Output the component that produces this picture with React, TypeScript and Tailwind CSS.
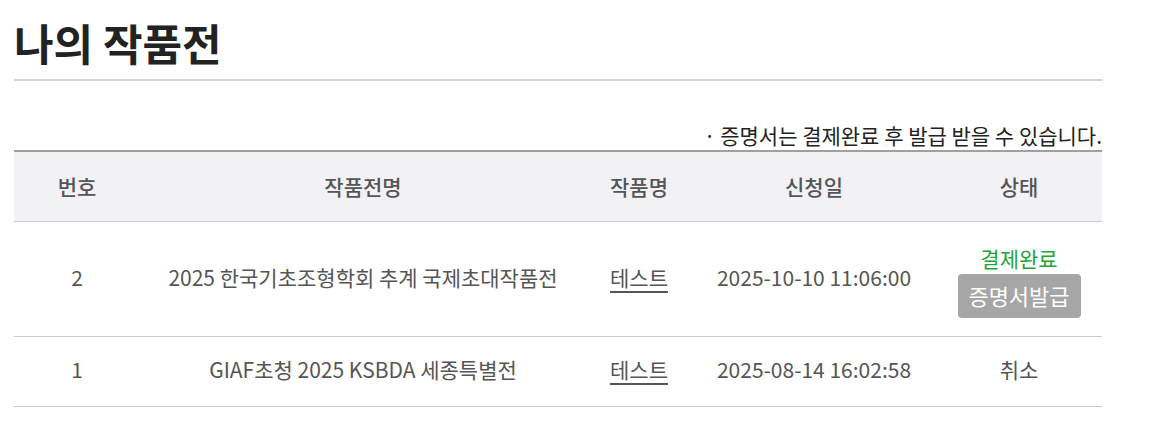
import * as React from 'react';

interface Entry {
  no: number;
  exhibition: string;
  work: string;
  date: string;
  status: 'paid' | 'cancelled';
}

const entries: Entry[] = [
  { no: 2, exhibition: '2025 한국기초조형학회 추계 국제초대작품전', work: '테스트', date: '2025-10-10 11:06:00', status: 'paid' },
  { no: 1, exhibition: 'GIAF초청 2025 KSBDA 세종특별전', work: '테스트', date: '2025-08-14 16:02:58', status: 'cancelled' },
];

export default function App() {
  return (
    <div className="min-h-screen bg-white px-[14px] font-['Noto_Sans_CJK_KR','Noto_Sans',sans-serif] text-[#555]">
      <div className="w-[1088px]">
        {/* Title */}
        <h1 className="border-b-2 border-[#d4d4d4] pt-[14px] pb-[9px] text-[43px] font-bold leading-[56px] text-[#222]">
          나의 작품전
        </h1>

        {/* Notice */}
        <p className="mt-[40px] text-right text-[21px] leading-[29px] text-[#222]">
          · 증명서는 결제완료 후 발급 받을 수 있습니다.
        </p>

        {/* Table */}
        <table className="w-full border-collapse text-center text-[21px]">
          <colgroup>
            <col className="w-[126px]" />
            <col className="w-[446px]" />
            <col className="w-[106px]" />
            <col className="w-[244px]" />
            <col className="w-[166px]" />
          </colgroup>
          <thead>
            <tr className="h-[70px] border-t-2 border-b border-t-[#a0a0a0] border-b-[#ccc] bg-[#f1f1f6]">
              <th className="font-medium">번호</th>
              <th className="font-medium">작품전명</th>
              <th className="font-medium">작품명</th>
              <th className="font-medium">신청일</th>
              <th className="font-medium">상태</th>
            </tr>
          </thead>
          <tbody>
            {entries.map((e) => (
              <tr
                key={e.no}
                className={`border-b border-[#ccc] ${e.status === 'paid' ? 'h-[115px]' : 'h-[70px]'}`}
              >
                <td className="pb-[2px]">{e.no}</td>
                <td className="pb-[2px]">{e.exhibition}</td>
                <td className="pb-[2px]">
                  <span className="underline decoration-[#555] decoration-2 underline-offset-[5px]">{e.work}</span>
                </td>
                <td className="pb-[2px]">{e.date}</td>
                <td className={e.status === 'paid' ? 'pt-[4px]' : 'pb-[2px]'}>
                  {e.status === 'paid' ? (
                    <div className="flex flex-col items-center">
                      <span className="leading-[28px] text-[#22a43c]">결제완료</span>
                      <button className="mt-[2px] h-[44px] w-[123px] rounded-[4px] bg-[#a6a6a6] text-[22px] text-white">
                        증명서발급
                      </button>
                    </div>
                  ) : (
                    '취소'
                  )}
                </td>
              </tr>
            ))}
          </tbody>
        </table>
      </div>
    </div>
  );
}
